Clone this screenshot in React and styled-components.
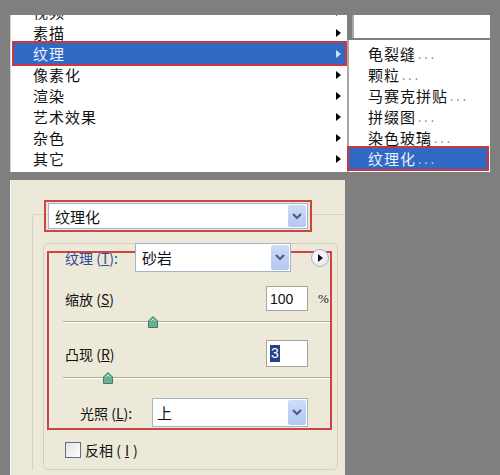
import React from 'react';
import styled, { createGlobalStyle } from 'styled-components';

const GlobalStyle = createGlobalStyle`
  html, body {
    margin: 0;
    padding: 0;
    width: 500px;
    height: 475px;
    overflow: hidden;
    background: #7f7f7f;
    font-family: "Noto Sans CJK SC", "Noto Sans", sans-serif;
  }
`;

const Page = styled.div`
  padding: 15px 0 0 10px;
`;

const TopRow = styled.div`
  display: flex;
  height: 157px;
`;

const Menu = styled.div`
  width: 337px;
  background: #fff;
  border-left: 1px solid #d6d6d6;
  overflow: hidden;
  box-sizing: border-box;
`;

const MenuList = styled.div`
  margin-top: -14px;
`;

const Item = styled.div`
  height: 21px;
  display: flex;
  align-items: center;
  justify-content: space-between;
  box-sizing: border-box;
  font-size: 15px;
  letter-spacing: 1px;
  color: #111;
  padding: 0 6px 0 22px;

  ${(p) =>
    p.$active &&
    `
    background: #316ac5;
    color: #eaf2ff;
    margin: 0 2px 0 3px;
    padding: 0 4px 0 19px;
    outline: 2px solid #c8383f;
  `}
`;

const Arrow = styled.span`
  width: 0;
  height: 0;
  border-top: 4px solid transparent;
  border-bottom: 4px solid transparent;
  border-left: 5px solid ${(p) => (p.$light ? '#cfe0ff' : '#000')};
`;

const SubCol = styled.div`
  width: 143px;
  display: flex;
  flex-direction: column;
  gap: 2px;
`;

const Stub = styled.div`
  margin-left: 5px;
  height: 23px;
  background: #fff;
  border-left: 2px solid #a8a8a8;
`;

const SubMenu = styled.div`
  flex: 1;
  background: #fff;
  border-left: 2px solid #a8a8a8;
  padding-top: 3px;
`;

const SubItem = styled.div`
  height: 21px;
  display: flex;
  align-items: center;
  font-size: 15px;
  letter-spacing: 1px;
  color: #111;
  padding-left: 19px;

  ${(p) =>
    p.$active &&
    `
    background: #316ac5;
    color: #eaf2ff;
    margin-right: 3px;
    outline: 2px solid #c8383f;
  `}
`;

const Dots = styled.span`
  color: ${(p) => (p.$light ? '#bcd0f5' : '#888')};
  font-size: 12px;
  letter-spacing: 3px;
  margin-left: 2px;
  align-self: flex-end;
  padding-bottom: 2px;
`;

const Dialog = styled.div`
  margin-top: 8px;
  width: 335px;
  height: 295px;
  background: #ece9d8;
  border-left: 1px solid #f7f6f0;
  box-sizing: border-box;
  padding: 20px 0 0 21px;
  overflow: hidden;
`;

const RedBox = styled.div`
  border: 2px solid #cc4545;
  box-sizing: border-box;
`;

const TitleBox = styled(RedBox)`
  position: relative;
  z-index: 1;
  margin-left: 12px;
  width: 268px;
  height: 32px;
  padding: 1px 2px;
`;

const Select = styled.div`
  position: relative;
  z-index: 1;
  display: flex;
  align-items: center;
  width: ${(p) => p.$w}px;
  height: ${(p) => p.$h}px;
  box-sizing: border-box;
  background: #fff;
  border: 1px solid #a4b4cc;
  font-size: 15px;
  color: #111;
`;

const SelectText = styled.span`
  flex: 1;
  padding-left: ${(p) => p.$pad || 6}px;
`;

const DropBtn = styled.span`
  width: 18px;
  align-self: stretch;
  margin: 1px;
  border-radius: 2px;
  background: linear-gradient(#cddcf8, #b3c8f1);
  display: flex;
  align-items: center;
  justify-content: center;
`;

const Panel = styled.div`
  margin-top: -18px;
  border-top: 1px solid #d6d3c4;
  border-left: 1px solid #d6d3c4;
  border-top-left-radius: 4px;
  padding: 28px 0 0 10px;
`;

const Fieldset = styled.div`
  width: 295px;
  height: 227px;
  box-sizing: border-box;
  border: 1px solid #d3d0c1;
  border-radius: 5px;
  padding: 7px 0 0 3px;
`;

const Group = styled(RedBox)`
  width: 285px;
  padding: 0 0 1px 16px;
`;

const Row = styled.div`
  display: flex;
  align-items: center;
  height: ${(p) => p.$h}px;
  margin-top: ${(p) => p.$mt}px;
  padding-left: ${(p) => p.$pl || 0}px;
`;

const Label = styled.span`
  font-size: 14px;
  color: ${(p) => (p.$blue ? '#2f4b98' : '#111')};
  width: ${(p) => (p.$w ? `${p.$w}px` : 'auto')};
  flex: ${(p) => (p.$w ? 'none' : '1')};
  white-space: nowrap;
`;

const RoundBtn = styled.span`
  position: relative;
  z-index: 1;
  margin-left: 20px;
  width: 18px;
  height: 18px;
  box-sizing: border-box;
  border-radius: 50%;
  border: 1px solid #aab3c6;
  background: radial-gradient(circle at 40% 35%, #fff, #dfe3ee);
  display: flex;
  align-items: center;
  justify-content: center;
`;

const NumInput = styled.div`
  width: 42px;
  height: ${(p) => p.$h}px;
  box-sizing: border-box;
  border: 1px solid #a5a59c;
  background: #fff;
  display: flex;
  align-items: center;
  padding-left: 3px;
  font-family: "Liberation Sans", sans-serif;
  font-size: 14px;
  color: #111;
`;

const Selected = styled.span`
  background: #26418a;
  color: #fff;
  padding: 0 1px;
  line-height: 17px;
`;

const Unit = styled.span`
  margin-left: 10px;
  width: 8px;
  font-family: "Liberation Serif", serif;
  font-size: 13px;
  color: #222;
`;

const Spacer = styled.span`
  width: ${(p) => p.$w}px;
`;

const Slider = styled.div`
  position: relative;
  margin: 5px 0 0 -2px;
  width: 267px;
  height: 12px;
`;

const Track = styled.div`
  position: absolute;
  left: 0;
  right: 0;
  top: 5px;
  height: 1px;
  background: #aeab9c;
  border-bottom: 1px solid #fff;
`;

const Thumb = styled.svg`
  position: absolute;
  top: 0;
`;

const CheckRow = styled.div`
  display: flex;
  align-items: center;
  margin: 10px 0 0 18px;
  font-size: 14px;
  color: #111;
  gap: 4px;
`;

const CheckBox = styled.span`
  width: 16px;
  height: 16px;
  box-sizing: border-box;
  border: 1px solid #5a6f8c;
  background: linear-gradient(135deg, #e4e2da, #fff);
`;

const Chevron = () => (
  <svg width="10" height="7" viewBox="0 0 10 7">
    <path d="M1 1 L5 5 L9 1" fill="none" stroke="#4a5f86" strokeWidth="2.2" />
  </svg>
);

const SliderThumb = ({ x }) => (
  <Thumb width="10" height="12" viewBox="0 0 10 12" style={{ left: x - 5 }}>
    <path d="M5 0.5 L9.5 5 L9.5 11.5 L0.5 11.5 L0.5 5 Z" fill="#6aae95" stroke="#3f7d68" />
    <path d="M3 5 L5 3 L7 5" fill="none" stroke="#c9eadc" />
  </Thumb>
);

const mainItems = ['视频', '素描', '纹理', '像素化', '渲染', '艺术效果', '杂色', '其它'];
const subItems = ['龟裂缝', '颗粒', '马赛克拼贴', '拼缀图', '染色玻璃', '纹理化'];

export default function App() {
  return (
    <>
      <GlobalStyle />
      <Page>
        <TopRow>
          <Menu>
            <MenuList>
              {mainItems.map((t) => (
                <Item key={t} $active={t === '纹理'}>
                  <span>{t}</span>
                  <Arrow $light={t === '纹理'} />
                </Item>
              ))}
            </MenuList>
          </Menu>
          <SubCol>
            <Stub />
            <SubMenu>
              {subItems.map((t) => (
                <SubItem key={t} $active={t === '纹理化'}>
                  {t}
                  <Dots $light={t === '纹理化'}>...</Dots>
                </SubItem>
              ))}
            </SubMenu>
          </SubCol>
        </TopRow>

        <Dialog>
          <TitleBox>
            <Select $w={260} $h={26}>
              <SelectText>纹理化</SelectText>
              <DropBtn>
                <Chevron />
              </DropBtn>
            </Select>
          </TitleBox>

          <Panel>
            <Fieldset>
              <Group>
                <Row $h={29} $mt={-10}>
                  <Label $w={70} $blue>
                    纹理 (<u>T</u>):
                  </Label>
                  <Select $w={156} $h={29}>
                    <SelectText>砂岩</SelectText>
                    <DropBtn>
                      <Chevron />
                    </DropBtn>
                  </Select>
                  <RoundBtn>
                    <svg width="6" height="8" viewBox="0 0 6 8">
                      <path d="M1 0 L6 4 L1 8 Z" fill="#111" />
                    </svg>
                  </RoundBtn>
                </Row>

                <Row $h={25} $mt={14}>
                  <Label>
                    缩放 (<u>S</u>)
                  </Label>
                  <NumInput $h={25}>100</NumInput>
                  <Unit>%</Unit>
                  <Spacer $w={4} />
                </Row>
                <Slider>
                  <Track />
                  <SliderThumb x={90} />
                </Slider>

                <Row $h={27} $mt={12}>
                  <Label>
                    凸现 (<u>R</u>)
                  </Label>
                  <NumInput $h={27}>
                    <Selected>3</Selected>
                  </NumInput>
                  <Spacer $w={22} />
                </Row>
                <Slider>
                  <Track />
                  <SliderThumb x={45} />
                </Slider>

                <Row $h={29} $mt={14} $pl={15}>
                  <Label $w={72}>
                    光照 (<u>L</u>):
                  </Label>
                  <Select $w={156} $h={29}>
                    <SelectText $pad={4}>上</SelectText>
                    <DropBtn>
                      <Chevron />
                    </DropBtn>
                  </Select>
                </Row>
              </Group>

              <CheckRow>
                <CheckBox />
                反相 (<u>I</u>)
              </CheckRow>
            </Fieldset>
          </Panel>
        </Dialog>
      </Page>
    </>
  );
}
